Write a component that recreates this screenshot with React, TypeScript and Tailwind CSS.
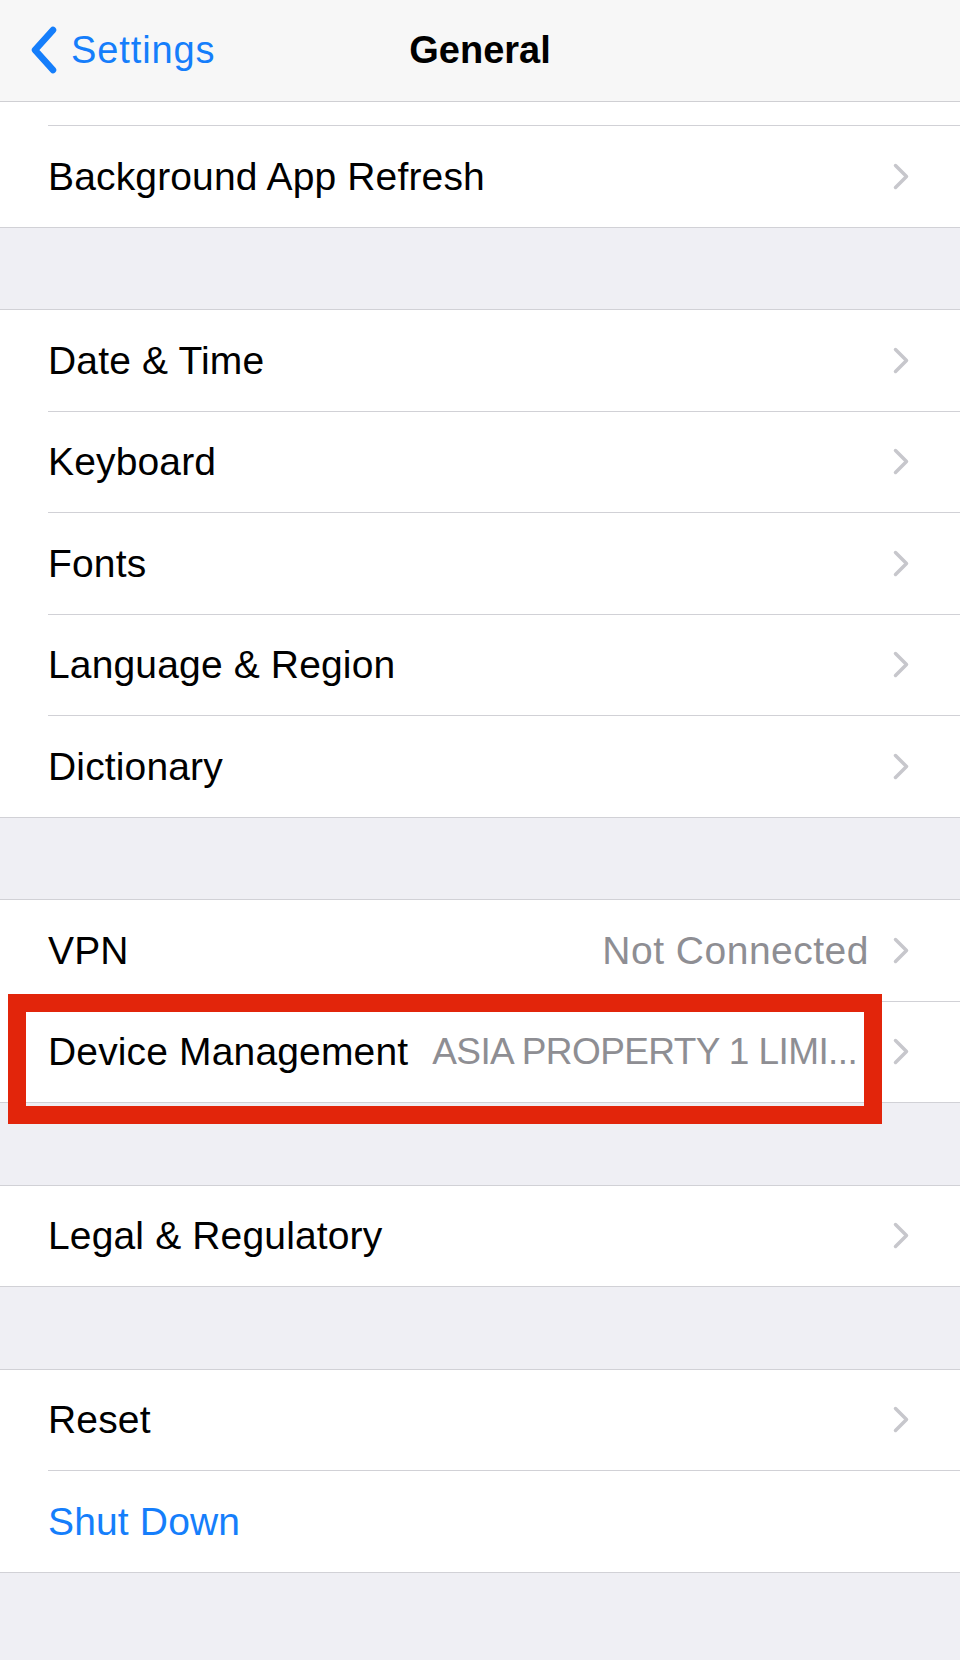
import type { ReactNode } from 'react';

type RowProps = {
    label: string;
    value?: string;
    blue?: boolean;
    chevron?: boolean;
    last?: boolean;
    clipValue?: boolean;
};

function Chevron() {
    return (
        <svg width="16" height="27" viewBox="0 0 16 27" className="shrink-0" fill="none">
            <polyline points="2.5,2.5 13.5,13.5 2.5,24.5" stroke="#c7c7cc" strokeWidth="3.5" strokeLinecap="round" strokeLinejoin="round" />
        </svg>
    );
}

// rows are 101.5px tall including their bottom hairline; the last one in a group gets a full-width line
function Row({ label, value, blue, chevron = true, last, clipValue }: RowProps) {
    return (
        <div className={`bg-white ${last ? '' : 'pl-[48px]'}`}>
            <div className={`h-[101.5px] flex items-center pr-[51px] border-b border-[#d1d1d6] ${last ? 'pl-[48px]' : ''}`}>
                <span className={`whitespace-nowrap text-[39px] tracking-[0.15px] leading-none ${blue ? 'text-[#157efb]' : 'text-black'}`}>{label}</span>
                {value && clipValue && (
                    <span className="ml-[24px] flex-1 min-w-0 overflow-hidden whitespace-nowrap text-[37px] tracking-[-0.6px] leading-none text-[#8e8e93]">
                        {value}
                    </span>
                )}
                {value && !clipValue && (
                    <span className="ml-auto whitespace-nowrap text-[39px] tracking-[0.5px] leading-none text-[#8e8e93]">{value}</span>
                )}
                {chevron && (
                    <div className={value ? 'ml-[24px]' : 'ml-auto'}>
                        <Chevron />
                    </div>
                )}
            </div>
        </div>
    );
}

function Section({ children }: { children: ReactNode }) {
    return <div className="bg-white border-t border-[#d1d1d6]">{children}</div>;
}

function Gap() {
    return <div className="h-[81.5px] shrink-0" />;
}

export default function App() {
    return (
        <div className="w-[960px] h-[1660px] bg-[#efeff4] flex flex-col overflow-hidden font-['Liberation_Sans','Helvetica',sans-serif]">
            {/* Navigation bar */}
            <div className="h-[101.5px] shrink-0 bg-[#f7f7f7] border-b border-[#cfcfd3] grid grid-cols-[1fr_auto_1fr] items-center">
                <div className="flex items-center pl-[30px] gap-[13px]">
                    <svg width="28" height="48" viewBox="0 0 28 48" fill="none">
                        <polyline points="23,4 5,24 23,44" stroke="#157efb" strokeWidth="6.5" strokeLinecap="round" strokeLinejoin="round" />
                    </svg>
                    <span className="text-[38px] tracking-[0.9px] leading-none text-[#157efb]">Settings</span>
                </div>
                <span className="text-[38px] leading-none font-bold text-black">General</span>
                <div />
            </div>

            {/* Group continuing from above the fold */}
            <div className="bg-white">
                <div className="pl-[48px]">
                    <div className="h-[24.5px] border-b border-[#d1d1d6]" />
                </div>
                <Row label="Background App Refresh" last />
            </div>

            <Gap />

            <Section>
                <Row label="Date & Time" />
                <Row label="Keyboard" />
                <Row label="Fonts" />
                <Row label="Language & Region" />
                <Row label="Dictionary" last />
            </Section>

            <Gap />

            <div className="relative">
                <Section>
                    <Row label="VPN" value="Not Connected" />
                    <Row label="Device Management" value="ASIA PROPERTY 1 LIMI..." clipValue last />
                </Section>
                {/* red highlight box drawn over the row */}
                <div className="absolute left-[7.5px] top-[95px] w-[874.5px] h-[130px] border-[18px] border-[#e2250b]" />
            </div>

            <Gap />

            <Section>
                <Row label="Legal & Regulatory" last />
            </Section>

            <Gap />

            <Section>
                <Row label="Reset" />
                <Row label="Shut Down" blue chevron={false} last />
            </Section>
        </div>
    );
}
